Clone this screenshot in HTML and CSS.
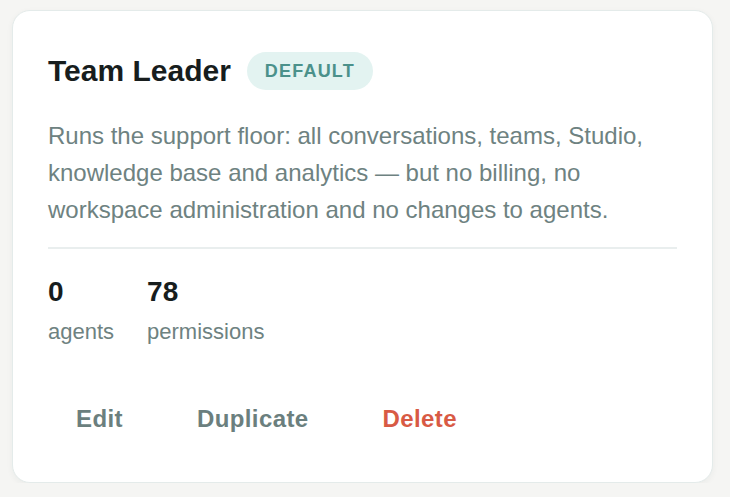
FILE: index.html
```html
<!DOCTYPE html>
<html lang="en">
<head>
<meta charset="utf-8">
<title>Team Leader role</title>
<link rel="stylesheet" href="styles.css">
</head>
<body>
  <div class="card">
    <div class="head">
      <h2 class="title">Team Leader</h2>
      <span class="badge">DEFAULT</span>
    </div>
    <p class="desc">Runs the support floor: all conversations, teams, Studio, knowledge base and analytics — but no billing, no workspace administration and no changes to agents.</p>
    <div class="divider"></div>
    <div class="stats">
      <div class="stat">
        <div class="num">0</div>
        <div class="label">agents</div>
      </div>
      <div class="stat">
        <div class="num">78</div>
        <div class="label">permissions</div>
      </div>
    </div>
    <div class="actions">
      <button class="btn">Edit</button>
      <button class="btn">Duplicate</button>
      <button class="btn danger">Delete</button>
    </div>
  </div>
</body>
</html>
```
FILE: styles.css
```css
html, body {
  margin: 0;
  padding: 0;
}
body {
  background: #f5f5f3;
  font-family: "Liberation Sans", Arial, sans-serif;
  padding: 10px 0 0 12px;
}
.card {
  box-sizing: border-box;
  width: 701px;
  height: 473px;
  background: #ffffff;
  border: 1px solid #e4ebea;
  border-radius: 18px;
  box-shadow: 0 2px 6px rgba(30, 50, 50, 0.05);
  padding: 41px 35px 0 35px;
}
.head {
  display: flex;
  align-items: center;
  gap: 16px;
  height: 38px;
}
.title {
  margin: 0;
  font-size: 30px;
  font-weight: 700;
  color: #171d1d;
  line-height: 1;
}
.badge {
  display: inline-flex;
  align-items: center;
  height: 38px;
  box-sizing: border-box;
  padding: 0 18px;
  border-radius: 19px;
  background: #e3f3f1;
  color: #4b918b;
  font-size: 18px;
  font-weight: 700;
  letter-spacing: 1.2px;
}
.desc {
  margin: 27px 0 0 0;
  font-size: 24px;
  line-height: 37px;
  color: #6e8281;
}
.divider {
  height: 2px;
  background: #e9eeee;
  margin-top: 19px;
}
.stats {
  display: flex;
  gap: 33px;
  margin-top: 26px;
}
.num {
  font-size: 28px;
  font-weight: 700;
  line-height: 33.6px;
  color: #171d1d;
}
.label {
  margin-top: 9px;
  font-size: 22px;
  line-height: 28px;
  color: #6e8281;
}
.actions {
  display: flex;
  gap: 18px;
  margin-top: 49px;
}
.btn {
  font-family: "Liberation Sans", Arial, sans-serif;
  background: transparent;
  border: none;
  padding: 11px 28px;
  font-size: 24px;
  line-height: 26px;
  font-weight: 700;
  letter-spacing: 0.4px;
  color: #6b7f7e;
  cursor: pointer;
}
.btn.danger {
  color: #d85a44;
}
```
